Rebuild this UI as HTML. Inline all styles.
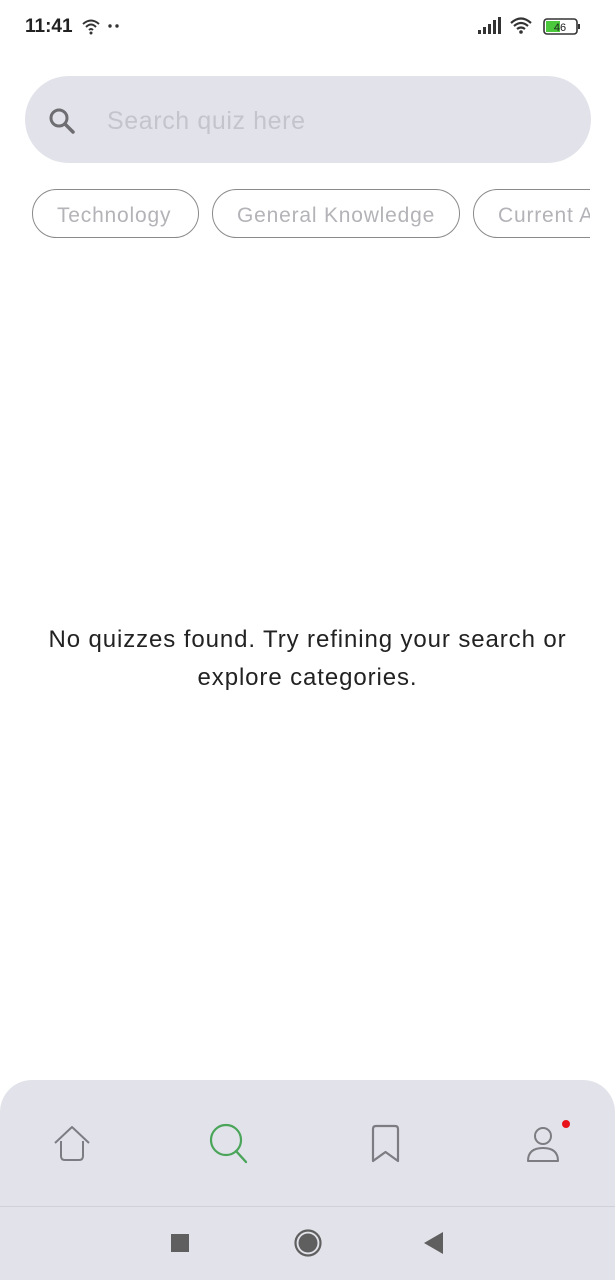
<!DOCTYPE html>
<html><head><meta charset="utf-8"><style>
*{margin:0;padding:0;box-sizing:border-box}
body{width:615px;height:1280px;background:#fff;font-family:"Liberation Sans",sans-serif;position:relative;overflow:hidden}
.abs{position:absolute}
.time{left:25px;top:16px;font-size:19px;font-weight:bold;color:#222}
.search{left:25px;top:76px;width:566px;height:87px;background:#e2e3ea;border-radius:44px}
.ph{left:107px;top:107px;font-size:25px;color:#c4c5cc;letter-spacing:0.6px}
.chips{left:32px;top:189px;width:558px;height:50px;overflow:hidden}
.chip{position:absolute;top:0;height:49px;border:1.5px solid #8a8a8a;border-radius:25px;font-size:21px;color:#b3b3b8;line-height:52px;padding-left:24px;white-space:nowrap;letter-spacing:0.8px}
.msg{left:0;width:615px;top:621px;text-align:center;font-size:24px;line-height:38px;color:#222;letter-spacing:0.9px}
.nav{left:0;top:1080px;width:615px;height:200px;background:#e2e3ea;border-radius:32px 32px 0 0}
.div{left:0;top:1206px;width:615px;height:1px;background:#d0d1d8}
</style></head><body>
<div class="abs time">11:41</div>
<svg class="abs" style="left:82px;top:18px" width="40" height="18" viewBox="0 0 40 18"><path d="M1 6 Q9 -1 17 6 M4 9 Q9 4 14 9 M7 12 Q9 10 11 12" stroke="#333" stroke-width="2" fill="none"/><circle cx="9" cy="15" r="1.5" fill="#333"/><circle cx="28" cy="8" r="1.7" fill="#333"/><circle cx="35" cy="8" r="1.7" fill="#333"/></svg>
<svg class="abs" style="left:477px;top:16px" width="105" height="22" viewBox="0 0 105 22"><rect x="1" y="14" width="3" height="4" fill="#333"/><rect x="6" y="11" width="3" height="7" fill="#333"/><rect x="11" y="8" width="3" height="10" fill="#333"/><rect x="16" y="4" width="3" height="14" fill="#333"/><rect x="21" y="1" width="3" height="17" fill="#333"/><path d="M34 7 Q44 -2 54 7 M37 10 Q44 4 51 10 M40 13 Q44 10 48 13" stroke="#333" stroke-width="2.2" fill="none"/><circle cx="44" cy="16" r="1.8" fill="#333"/><rect x="67" y="3" width="33" height="15" rx="3" fill="none" stroke="#333" stroke-width="1.6"/><rect x="69" y="5" width="14" height="11" fill="#4bc83c"/><rect x="101" y="8" width="2" height="5" fill="#333"/><text x="83" y="15" font-size="11" font-family="Liberation Sans" text-anchor="middle" fill="#222">46</text></svg>
<div class="abs search"></div>
<svg class="abs" style="left:47px;top:106px" width="30" height="30" viewBox="0 0 30 30"><circle cx="12" cy="12" r="8" stroke="#6d6d72" stroke-width="3" fill="none"/><path d="M18 18 L26 26" stroke="#6d6d72" stroke-width="3.5" stroke-linecap="round"/></svg>
<div class="abs ph">Search quiz here</div>
<div class="abs chips">
<div class="chip" style="left:0;width:167px">Technology</div>
<div class="chip" style="left:180px;width:248px">General Knowledge</div>
<div class="chip" style="left:441px;width:200px">Current Affairs</div>
</div>
<div class="abs msg">No quizzes found. Try refining your search or<br>explore categories.</div>
<div class="abs nav"></div>
<div class="abs div"></div>
<svg class="abs" style="left:52px;top:1124px" width="40" height="40" viewBox="0 0 40 40"><path d="M3 19 L20 3 L37 19 M9 17 V32 Q9 36 13 36 H27 Q31 36 31 32 V17" stroke="#7c7c82" stroke-width="2" fill="none" stroke-linejoin="round"/></svg>
<svg class="abs" style="left:206px;top:1122px" width="46" height="46" viewBox="0 0 46 46"><circle cx="20" cy="18" r="15" stroke="#4aa55a" stroke-width="2.2" fill="none"/><path d="M30 29 L40 40" stroke="#4aa55a" stroke-width="2.4" stroke-linecap="round"/></svg>
<svg class="abs" style="left:370px;top:1124px" width="34" height="40" viewBox="0 0 34 40"><path d="M3 37 V5 Q3 2 6 2 H25 Q28 2 28 5 V37 L15.5 28 Z" stroke="#7c7c82" stroke-width="2.2" fill="none" stroke-linejoin="round"/></svg>
<svg class="abs" style="left:522px;top:1118px" width="50" height="48" viewBox="0 0 50 48"><circle cx="21" cy="18" r="8" stroke="#7c7c82" stroke-width="2" fill="none"/><path d="M6 43 Q6 30 21 30 Q36 30 36 43 Z" stroke="#7c7c82" stroke-width="2" fill="none" stroke-linejoin="round"/><circle cx="44" cy="6" r="4" fill="#e8131a"/></svg>
<div class="abs" style="left:171px;top:1234px;width:18px;height:18px;background:#5f5f5f"></div>
<svg class="abs" style="left:293px;top:1228px" width="30" height="30" viewBox="0 0 30 30"><circle cx="15" cy="15" r="12.5" stroke="#5f5f5f" stroke-width="2.2" fill="none"/><circle cx="15" cy="15" r="9.5" fill="#5f5f5f"/></svg>
<svg class="abs" style="left:423px;top:1231px" width="22" height="24" viewBox="0 0 22 24"><path d="M20 1 V23 L1 12 Z" fill="#5f5f5f"/></svg>
</body></html>
